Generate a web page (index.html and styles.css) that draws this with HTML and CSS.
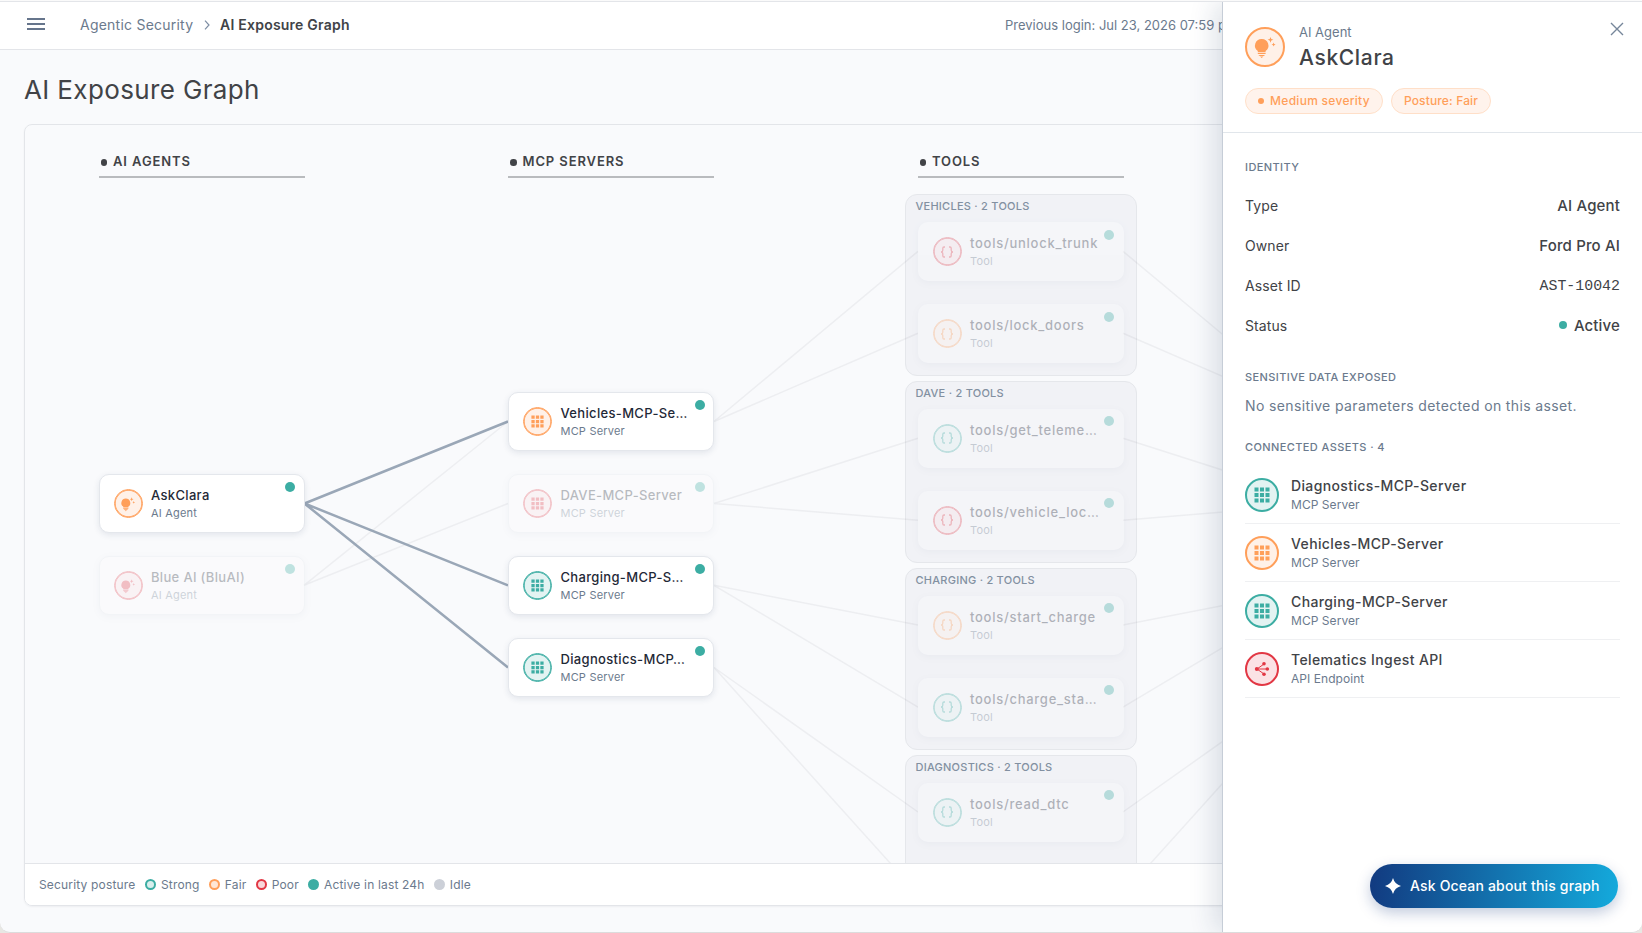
FILE: index.html
```html
<!DOCTYPE html>
<html lang="en">
<head>
    <meta charset="UTF-8">
    <meta name="viewport" content="width=device-width, initial-scale=1.0">
    <title>AI Exposure Graph</title>
    <link rel="stylesheet" href="styles.css">
</head>
<body>
    <!-- Icon sprite -->
    <svg class="sprite" aria-hidden="true">
        <symbol id="icon-agent" viewBox="0 0 24 24">
            <path d="M8.7 3.9a6.6 6.6 0 0 0-3.9 12v1.3h7.8v-1.3a6.6 6.6 0 0 0-3.9-12z"/>
            <path d="M4.8 18h7.8v1.1H4.8zM5.3 19.9h6.8l-1.4 1.2h-4zM7 21.5h3.4l-1.7 1.5z"/>
            <path d="M17.5 1.900l.8 2.100 2.100.8-2.100.8-.8 2.100-.8-2.100-2.100-.8 2.100-.8zM20.600 7.600l.6 1.400 1.400.6-1.400.6-.6 1.400-.6-1.400-1.400-.6 1.400-.6z"/>
        </symbol>
        <symbol id="icon-server" viewBox="0 0 16 16">
            <path d="M.5.5h4v4h-4zM6 .5h4v4H6zM11.5.5h4v4h-4zM.5 6h4v4h-4zM6 6h4v4H6zM11.5 6h4v4h-4zM.5 11.5h4v4h-4zM6 11.5h4v4H6zM11.5 11.5h4v4h-4z"/>
        </symbol>
        <symbol id="icon-tool" viewBox="0 0 14 12">
            <path d="M5 1H4Q2.8 1 2.8 2.2v2Q2.8 6 1 6q1.8 0 1.8 1.8v2Q2.8 11 4 11h1M9 1h1q1.2 0 1.2 1.2v2Q11.2 6 13 6q-1.8 0-1.8 1.8v2Q11.2 11 10 11H9" fill="none" stroke="currentColor" stroke-width="1.3"/>
        </symbol>
        <symbol id="icon-api" viewBox="0 0 16 16">
            <path d="M3 8l7-5M3 8h10M3 8l7 5" fill="none" stroke="currentColor" stroke-width="1"/>
            <circle cx="2.8" cy="8" r="2"/>
            <circle cx="10" cy="2.8" r="1.8"/>
            <circle cx="13.3" cy="8" r="1.8"/>
            <circle cx="10" cy="13.2" r="1.8"/>
        </symbol>
    </svg>

    <div class="app">
        <header class="topbar">
            <button class="menu-button" aria-label="Menu"><span></span><span></span><span></span></button>
            <nav class="breadcrumb">
                <a class="breadcrumb-link">Agentic Security</a>
                <svg class="breadcrumb-sep" viewBox="0 0 6 10"><path d="M1 .7L5 5 1 9.3"/></svg>
                <span class="breadcrumb-current">AI Exposure Graph</span>
            </nav>
            <div class="last-login">Previous login: Jul 23, 2026 07:59 pm</div>
        </header>

        <main class="page">
            <h1>AI Exposure Graph</h1>

            <div class="graph-card">
                <div class="graph">
                    <svg class="edges" viewBox="25 125 1592 738">
                        <g class="edge-dim">
                            <path d="M304 585.3L508 421.5M304 585.3L508 503.5"/>
                            <path d="M714 421.5L918 251.3M714 421.5L918 333.3"/>
                            <path d="M714 503.5L918 438.2M714 503.5L918 520.2"/>
                            <path d="M714 585.3L918 625.1M714 585.3L918 707.1"/>
                            <path d="M714 667.5L918 812M714 667.5L918 894"/>
                            <path d="M1123 251.3L1327 421.5M1123 333.3L1327 421.5"/>
                            <path d="M1123 438.2L1327 503.5M1123 520.2L1327 503.5"/>
                            <path d="M1123 625.1L1327 585.3M1123 707.1L1327 585.3"/>
                            <path d="M1123 812L1327 667.5M1123 894L1327 667.5"/>
                        </g>
                        <g class="edge-active">
                            <path d="M304.5 503.5L508 421.5M304.5 503.5L508 585.3M304.5 503.5L508 667.5"/>
                        </g>
                    </svg>

                    <section class="column agents">
                        <h2>AI AGENTS</h2>
                        <div class="node fair">
                            <span class="badge"><svg><use href="#icon-agent"/></svg></span>
                            <div class="node-text"><strong>AskClara</strong><small>AI Agent</small></div>
                        </div>
                        <div class="node poor dimmed">
                            <span class="badge"><svg><use href="#icon-agent"/></svg></span>
                            <div class="node-text"><strong>Blue AI (BluAI)</strong><small>AI Agent</small></div>
                        </div>
                    </section>

                    <section class="column servers">
                        <h2>MCP SERVERS</h2>
                        <div class="node fair">
                            <span class="badge"><svg class="grid-icon"><use href="#icon-server"/></svg></span>
                            <div class="node-text"><strong>Vehicles-MCP-Se…</strong><small>MCP Server</small></div>
                        </div>
                        <div class="node poor dimmed">
                            <span class="badge"><svg class="grid-icon"><use href="#icon-server"/></svg></span>
                            <div class="node-text"><strong>DAVE-MCP-Server</strong><small>MCP Server</small></div>
                        </div>
                        <div class="node strong">
                            <span class="badge"><svg class="grid-icon"><use href="#icon-server"/></svg></span>
                            <div class="node-text"><strong>Charging-MCP-S…</strong><small>MCP Server</small></div>
                        </div>
                        <div class="node strong">
                            <span class="badge"><svg class="grid-icon"><use href="#icon-server"/></svg></span>
                            <div class="node-text"><strong>Diagnostics-MCP…</strong><small>MCP Server</small></div>
                        </div>
                    </section>

                    <section class="column tools">
                        <h2>TOOLS</h2>
                        <div class="group">
                            <h3>VEHICLES · 2 TOOLS</h3>
                            <div class="node poor dimmed">
                                <span class="badge"><svg class="tool-icon"><use href="#icon-tool"/></svg></span>
                                <div class="node-text"><strong>tools/unlock_trunk</strong><small>Tool</small></div>
                            </div>
                            <div class="node fair dimmed">
                                <span class="badge"><svg class="tool-icon"><use href="#icon-tool"/></svg></span>
                                <div class="node-text"><strong>tools/lock_doors</strong><small>Tool</small></div>
                            </div>
                        </div>
                        <div class="group">
                            <h3>DAVE · 2 TOOLS</h3>
                            <div class="node strong dimmed">
                                <span class="badge"><svg class="tool-icon"><use href="#icon-tool"/></svg></span>
                                <div class="node-text"><strong>tools/get_teleme…</strong><small>Tool</small></div>
                            </div>
                            <div class="node poor dimmed">
                                <span class="badge"><svg class="tool-icon"><use href="#icon-tool"/></svg></span>
                                <div class="node-text"><strong>tools/vehicle_loc…</strong><small>Tool</small></div>
                            </div>
                        </div>
                        <div class="group">
                            <h3>CHARGING · 2 TOOLS</h3>
                            <div class="node fair dimmed">
                                <span class="badge"><svg class="tool-icon"><use href="#icon-tool"/></svg></span>
                                <div class="node-text"><strong>tools/start_charge</strong><small>Tool</small></div>
                            </div>
                            <div class="node strong dimmed">
                                <span class="badge"><svg class="tool-icon"><use href="#icon-tool"/></svg></span>
                                <div class="node-text"><strong>tools/charge_sta…</strong><small>Tool</small></div>
                            </div>
                        </div>
                        <div class="group">
                            <h3>DIAGNOSTICS · 2 TOOLS</h3>
                            <div class="node strong dimmed">
                                <span class="badge"><svg class="tool-icon"><use href="#icon-tool"/></svg></span>
                                <div class="node-text"><strong>tools/read_dtc</strong><small>Tool</small></div>
                            </div>
                        </div>
                    </section>
                </div>

                <footer class="legend">
                    <span class="legend-title">Security posture</span>
                    <span class="legend-item"><i class="ring strong"></i>Strong</span>
                    <span class="legend-item"><i class="ring fair"></i>Fair</span>
                    <span class="legend-item"><i class="ring poor"></i>Poor</span>
                    <span class="legend-item"><i class="dot active"></i>Active in last 24h</span>
                    <span class="legend-item"><i class="dot idle"></i>Idle</span>
                </footer>
            </div>
        </main>

        <!-- Asset details drawer -->
        <aside class="drawer">
            <div class="drawer-header">
                <div class="drawer-title">
                    <span class="badge large fair"><svg><use href="#icon-agent"/></svg></span>
                    <div>
                        <p class="asset-kind">AI Agent</p>
                        <p class="asset-name">AskClara</p>
                    </div>
                    <svg class="close" viewBox="0 0 14 14"><path d="M1 1l12 12M13 1L1 13"/></svg>
                </div>
                <div class="chips">
                    <span class="chip severity"><i></i>Medium severity</span>
                    <span class="chip">Posture: Fair</span>
                </div>
            </div>

            <div class="drawer-body">
                <h4>IDENTITY</h4>
                <dl>
                    <div><dt>Type</dt><dd>AI Agent</dd></div>
                    <div><dt>Owner</dt><dd>Ford Pro AI</dd></div>
                    <div><dt>Asset ID</dt><dd class="mono">AST-10042</dd></div>
                    <div><dt>Status</dt><dd class="status"><i></i>Active</dd></div>
                </dl>

                <h4 class="data-heading">SENSITIVE DATA EXPOSED</h4>
                <p class="empty">No sensitive parameters detected on this asset.</p>

                <h4 class="assets-heading">CONNECTED ASSETS · 4</h4>
                <ul class="assets">
                    <li>
                        <span class="badge medium strong"><svg class="grid-icon"><use href="#icon-server"/></svg></span>
                        <div><strong>Diagnostics-MCP-Server</strong><small>MCP Server</small></div>
                    </li>
                    <li>
                        <span class="badge medium fair"><svg class="grid-icon"><use href="#icon-server"/></svg></span>
                        <div><strong>Vehicles-MCP-Server</strong><small>MCP Server</small></div>
                    </li>
                    <li>
                        <span class="badge medium strong"><svg class="grid-icon"><use href="#icon-server"/></svg></span>
                        <div><strong>Charging-MCP-Server</strong><small>MCP Server</small></div>
                    </li>
                    <li>
                        <span class="badge medium poor"><svg class="grid-icon"><use href="#icon-api"/></svg></span>
                        <div><strong>Telematics Ingest API</strong><small>API Endpoint</small></div>
                    </li>
                </ul>
            </div>
        </aside>

        <button class="ask-button">
            <svg viewBox="0 0 16 16"><path d="M8 0Q9.7 6.3 16 8 9.7 9.7 8 16 6.3 9.7 0 8 6.3 6.3 8 0z"/></svg>
            <span>Ask Ocean about this graph</span>
        </button>
    </div>
</body>
</html>
```
FILE: styles.css
```css
* {
    box-sizing: border-box;
    margin: 0;
    padding: 0;
}

:root {
    --text: #414347;
    --muted: #6b7a8d;
    --line: #e3e5e9;
    --strong: #3cada3;
    --fair: #ff9f5a;
    --poor: #e23744;
}

body {
    height: 933px;
    overflow: hidden;
    background: #e8e7e3;
    border-top: 1px solid #fafafa;
    font-family: Inter, "Open Sans", sans-serif;
    color: var(--text);
}

i {
    font-style: normal;
}

.sprite {
    display: none;
}

.app {
    position: relative;
    height: 932px;
    overflow: hidden;
    background: #f9fafc;
    border-top: 1px solid var(--line);
    border-bottom: 1px solid #dcdcdc;
    border-radius: 0 0 10px 10px;
}

/* Top bar */
.topbar {
    display: flex;
    align-items: center;
    height: 48px;
    padding-left: 27px;
    background: #fff;
    border-bottom: 1px solid var(--line);
}

.menu-button {
    display: flex;
    flex-direction: column;
    gap: 3px;
    width: 18px;
    margin-bottom: 3px;
    border: none;
    background: none;
}

.menu-button span {
    height: 2px;
    background: #66758c;
}

.breadcrumb {
    display: flex;
    align-items: center;
    width: 925px;
    margin: 0 0 2px 35px;
    font-size: 14px;
    letter-spacing: 0.23px;
}

.breadcrumb-link {
    width: 124px;
    color: var(--muted);
}

.breadcrumb-sep {
    width: 6px;
    height: 10px;
    margin-right: 10px;
    fill: none;
    stroke: #7d8da3;
    stroke-width: 1.2;
}

.breadcrumb-current {
    font-weight: 600;
}

.last-login {
    margin-bottom: 1px;
    font-size: 13px;
    color: var(--muted);
    white-space: nowrap;
}

/* Page */
.page {
    padding: 20px 24px 0;
}

h1 {
    height: 54px;
    line-height: 40px;
    font-size: 26px;
    font-weight: 400;
    letter-spacing: 0.37px;
}

.graph-card {
    height: 782px;
    border: 1px solid var(--line);
    border-radius: 8px;
    overflow: hidden;
    box-shadow: 0 1px 2px rgba(16, 24, 40, 0.05);
}

.graph {
    position: relative;
    display: grid;
    grid-template-columns: repeat(3, 206px);
    column-gap: 203.5px;
    height: 738px;
    padding: 24px 0 0 73.5px;
    overflow: hidden;
}

.edges {
    position: absolute;
    top: 0;
    left: 0;
    z-index: 1;
    width: 1592px;
    height: 738px;
    fill: none;
}

.edge-dim {
    stroke: #5c6068;
    stroke-opacity: 0.075;
    stroke-width: 1.5;
}

.edge-active {
    stroke: #9aa7b7;
    stroke-width: 2.5;
}

.column h2 {
    display: flex;
    align-items: center;
    gap: 6px;
    height: 28.7px;
    padding: 0 0 3px 2px;
    border-bottom: 2px solid #b9bbbe;
    font-size: 13px;
    font-weight: 600;
    letter-spacing: 0.9px;
}

.column h2::before {
    content: "";
    width: 6.5px;
    height: 6.5px;
    margin-top: 3px;
    border-radius: 50%;
    background: var(--text);
}

.agents h2 {
    margin-bottom: 296.5px;
}

.servers h2 {
    margin-bottom: 214.5px;
}

.tools h2 {
    margin-bottom: 16.6px;
}

.node {
    position: relative;
    z-index: 2;
    display: flex;
    align-items: center;
    gap: 8.5px;
    height: 59px;
    margin-bottom: 23px;
    padding-left: 14px;
    background: #fff;
    border: 1px solid #e4e7ec;
    border-radius: 10px;
    box-shadow: 0 2px 6px rgba(30, 50, 90, 0.1);
}

/* Activity indicator in the corner of a node */
.node::after {
    content: "";
    position: absolute;
    top: 6.5px;
    right: 8.5px;
    width: 10px;
    height: 10px;
    border-radius: 50%;
    background: var(--strong);
}

.node.dimmed {
    background: #fdfdfc;
    opacity: 0.3;
}

.node-text {
    padding-top: 1px;
}

.node-text strong {
    display: block;
    line-height: 18px;
    font-size: 13px;
    font-weight: 500;
    letter-spacing: 0.33px;
    color: #1f2937;
    white-space: nowrap;
}

.tools .node-text strong {
    letter-spacing: 0.73px;
}

.node-text small {
    display: block;
    line-height: 18px;
    font-size: 11px;
    letter-spacing: 0.2px;
    color: var(--muted);
}

.group {
    height: 181.5px;
    margin: 0 -13px 5.4px;
    padding: 0 12px;
    background: #f1f2f6;
    border: 1px solid #e5e7eb;
    border-radius: 12px;
}

.group h3 {
    height: 26.8px;
    line-height: 23px;
    margin-left: -2px;
    font-size: 11px;
    font-weight: 500;
    letter-spacing: 0.25px;
    color: #8290a1;
}

.group .node {
    background: #fdfeff;
    border-color: transparent;
    opacity: 0.32;
}

/* Round icon badges */
.badge {
    display: flex;
    flex-shrink: 0;
    align-items: center;
    justify-content: center;
    width: 29px;
    height: 29px;
    border: 1px solid currentColor;
    border-radius: 50%;
    box-shadow: inset 0 0 0 0.7px currentColor;
}

.badge svg {
    width: 16px;
    height: 16px;
    fill: currentColor;
}

.badge .grid-icon {
    width: 13px;
    height: 13px;
}

.badge .tool-icon {
    width: 14px;
    height: 12px;
}

.badge.large {
    width: 40px;
    height: 40px;
    border-width: 2px;
    box-shadow: none;
}

.badge.large svg {
    width: 24px;
    height: 24px;
}

.badge.medium {
    width: 34px;
    height: 34px;
    border-width: 2px;
    box-shadow: none;
}

.badge.medium .grid-icon {
    width: 16px;
    height: 16px;
}

.strong .badge,
.badge.strong {
    color: var(--strong);
    background: #e3f3f2;
}

.fair .badge,
.badge.fair {
    color: var(--fair);
    background: #fff1e8;
}

.poor .badge,
.badge.poor {
    color: var(--poor);
    background: #fbe2e5;
}

/* Legend */
.legend {
    display: flex;
    align-items: center;
    height: 42px;
    padding-left: 14px;
    background: #fff;
    border-top: 1px solid var(--line);
    font-size: 12px;
    letter-spacing: 0.17px;
    color: var(--muted);
}

.legend-title {
    width: 106px;
}

.legend-item {
    display: flex;
    align-items: center;
    gap: 5px;
    margin-right: 9.2px;
}

.ring,
.dot {
    width: 11px;
    height: 11px;
    border-radius: 50%;
}

.ring {
    border: 2px solid;
}

.ring.strong {
    border-color: var(--strong);
    background: #d8efed;
}

.ring.fair {
    border-color: var(--fair);
    background: #ffe7d6;
}

.ring.poor {
    border-color: var(--poor);
    background: #f9d7da;
}

.dot.active {
    background: var(--strong);
}

.dot.idle {
    background: #ccd0d8;
}

/* Drawer */
.drawer {
    position: absolute;
    top: 0;
    right: 0;
    bottom: 0;
    z-index: 5;
    width: 420px;
    background: #fff;
    border-left: 1px solid #c6cdd7;
    box-shadow: -8px 0 24px rgba(30, 55, 95, 0.14);
}

.drawer-header {
    height: 131px;
    padding: 20px 18px 0 22px;
    border-bottom: 1px solid #e1e6eb;
}

.drawer-title {
    display: flex;
    height: 66px;
}

.drawer-title .badge {
    margin: 5px 14px 0 0;
}

.asset-kind {
    line-height: 21px;
    font-size: 13px;
    color: var(--muted);
}

.asset-name {
    line-height: 30px;
    font-size: 21px;
    font-weight: 500;
    letter-spacing: 0.65px;
}

.close {
    width: 14px;
    height: 14px;
    margin-left: auto;
    fill: none;
    stroke: #76869a;
    stroke-width: 1.4;
}

.chips {
    display: flex;
    gap: 8px;
}

.chip {
    display: flex;
    align-items: center;
    justify-content: center;
    width: 100px;
    height: 26px;
    padding-bottom: 1px;
    background: #fff3ec;
    border: 1px solid #ffdfc8;
    border-radius: 13px;
    font-size: 12px;
    font-weight: 500;
    letter-spacing: 0.15px;
    color: var(--fair);
}

.chip.severity {
    width: 138px;
    gap: 6px;
    letter-spacing: 0.28px;
}

.chip i {
    width: 6px;
    height: 6px;
    border-radius: 50%;
    background: var(--fair);
}

.drawer-body {
    padding: 24px 22px 0;
}

h4 {
    line-height: 20px;
    font-size: 11px;
    font-weight: 500;
    letter-spacing: 0.4px;
    color: var(--muted);
}

dl {
    margin-top: 8px;
}

dl div {
    display: flex;
    align-items: center;
    justify-content: space-between;
    height: 40px;
    font-size: 14px;
    letter-spacing: 0.1px;
}

dd {
    font-size: 15px;
    font-weight: 500;
    letter-spacing: 0.15px;
}

dd.mono {
    padding-top: 2px;
    font-family: "Liberation Mono", monospace;
    font-size: 14.9px;
    font-weight: 400;
    letter-spacing: 0;
}

dd.status {
    display: flex;
    align-items: center;
    gap: 7px;
}

dd.status i {
    width: 8px;
    height: 8px;
    border-radius: 50%;
    background: var(--strong);
}

.data-heading {
    margin-top: 22px;
}

.empty {
    line-height: 22px;
    margin-top: 8px;
    font-size: 14px;
    letter-spacing: 0.37px;
    color: var(--muted);
}

.assets-heading {
    margin-top: 20px;
}

.assets {
    margin-top: 9px;
    list-style: none;
}

.assets li {
    display: flex;
    align-items: center;
    gap: 12px;
    height: 58px;
    border-bottom: 1px solid #eff0f2;
}

.assets strong {
    display: block;
    line-height: 20px;
    font-size: 14px;
    font-weight: 500;
    letter-spacing: 0.37px;
}

.assets small {
    display: block;
    line-height: 17px;
    font-size: 12px;
    letter-spacing: 0.05px;
    color: var(--muted);
}

.ask-button {
    position: absolute;
    right: 24px;
    bottom: 24px;
    z-index: 6;
    display: flex;
    align-items: center;
    gap: 9px;
    width: 248px;
    height: 44px;
    padding: 0 0 1px 15px;
    border: none;
    border-radius: 22px;
    background: linear-gradient(95deg, #123a80, #14aadc);
    box-shadow: 0 5px 14px rgba(20, 55, 125, 0.26);
    font-family: inherit;
    font-size: 14px;
    font-weight: 500;
    letter-spacing: 0.17px;
    color: #fff;
    white-space: nowrap;
}

.ask-button svg {
    width: 16px;
    height: 16px;
    fill: #fff;
}
```
